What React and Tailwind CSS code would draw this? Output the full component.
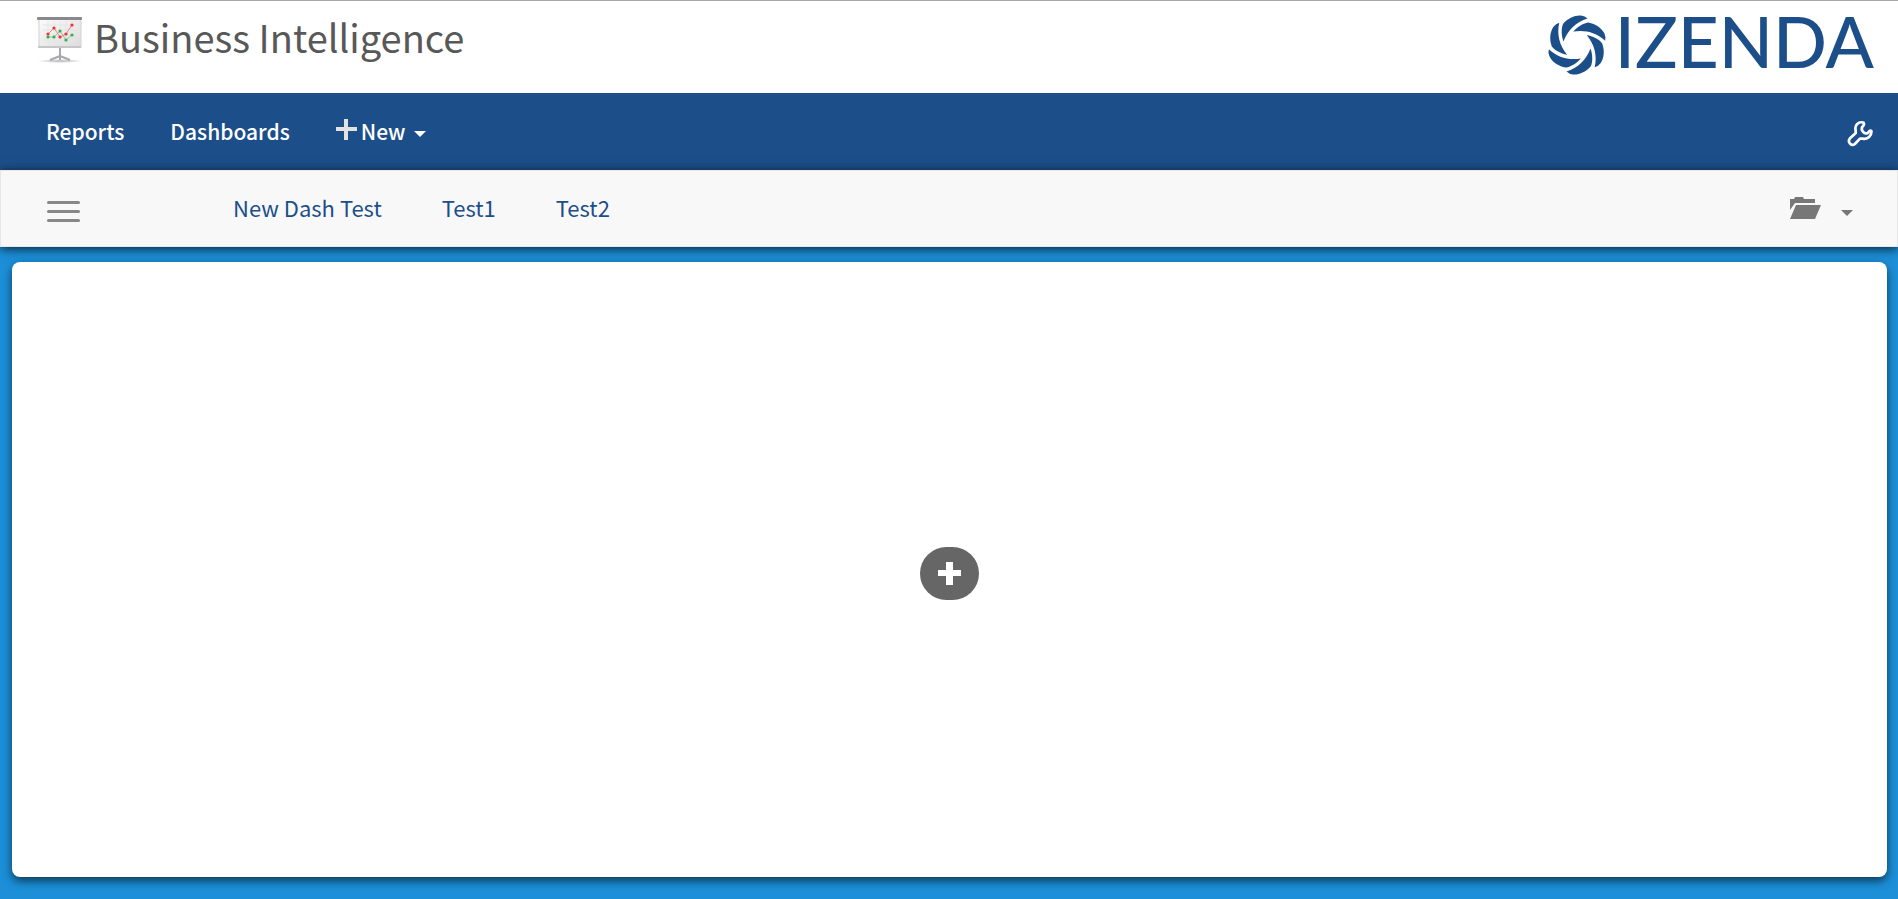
const blades = [0, 60, 120, 180, 240, 300];

function BoardIcon() {
  return (
    <svg className="h-12 w-12" viewBox="0 0 48 48" aria-hidden="true">
      <defs>
        <linearGradient id="board" x1="0" y1="0" x2="1" y2="1">
          <stop offset="0" stopColor="#fbfbfb" />
          <stop offset="1" stopColor="#dcdcdc" />
        </linearGradient>
        <radialGradient id="floor">
          <stop offset="0" stopColor="#b4b4b4" />
          <stop offset="1" stopColor="#ffffff" />
        </radialGradient>
      </defs>
      <ellipse cx="24" cy="45" rx="23" ry="2" fill="url(#floor)" />
      <rect x="3" y="3" width="42" height="28" fill="url(#board)" stroke="#d2d2d4" />
      <path d="M7 9h34M7 14h34M7 19h34M7 24h34M12 5v24M18 5v24M24 5v24M30 5v24M36 5v24" stroke="#e6e6e6" />
      <rect x="1" y="1" width="45" height="3" rx="1" fill="#88888e" />
      <rect x="2" y="30" width="43" height="2" fill="#c6c6c8" />
      <path d="M24 32v12M24 40l-10 4M24 40l10 4" fill="none" stroke="#a8a8ac" strokeWidth="2" />
      <path d="M12 21h6l6-6 6 9 6-5" fill="none" stroke="#8ccc98" />
      <path d="M12 18l6-6 6 9 6-3 6-9" fill="none" stroke="#f08080" />
      <g fill="#2fb04c">
        <circle cx="12" cy="21" r="1.6" /><circle cx="18" cy="21" r="1.6" /><circle cx="24" cy="15" r="1.6" />
        <circle cx="30" cy="24" r="1.6" /><circle cx="36" cy="19" r="1.6" />
      </g>
      <g fill="#ee3038">
        <circle cx="12" cy="18" r="1.6" /><circle cx="18" cy="12" r="1.6" /><circle cx="24" cy="21" r="1.6" />
        <circle cx="30" cy="18" r="1.6" /><circle cx="36" cy="9" r="1.6" />
      </g>
    </svg>
  );
}

function ApertureMark() {
  return (
    <svg className="size-15" viewBox="-30 -30 60 60" fill="#1c4e89" aria-hidden="true">
      {blades.map((angle) => (
        <path
          key={angle}
          transform={`rotate(${angle})`}
          d="M-13.500-3.500C-15.500-9-16-16-14-21C-9-27-2-30 4-29.500Q8-29 10.500-26.500C-1-23-9-15-13.500-3.500Z"
        />
      ))}
    </svg>
  );
}

function Caret() {
  return (
    <svg className="h-[6px] w-3" viewBox="0 0 12 6" fill="currentColor" aria-hidden="true">
      <path d="M0 0h12L6 6Z" />
    </svg>
  );
}

export default function App() {
  return (
    <div className="flex min-h-screen flex-col bg-[#1c8fd8] font-['Noto_Sans_CJK_SC','Open_Sans',sans-serif]">
      <header className="flex h-[93px] items-start justify-between border-t border-[#a8a8a8] bg-white pr-6 pl-9">
        <h1 className="flex items-start gap-[10px] pt-[15px] text-[38px] leading-[42px] text-[#585858]">
          <BoardIcon />
          Business Intelligence
        </h1>
        <div className="flex items-start gap-2 pt-[14px] text-[#1c4e89]">
          <ApertureMark />
          <span className="font-[Lato,sans-serif] text-[71px] leading-[52px] font-medium">IZENDA</span>
        </div>
      </header>

      <nav className="flex h-[77px] items-center justify-between bg-[#1c4e89] pr-6 pl-[46px] text-[21px] font-medium text-white">
        <div className="flex items-center gap-[46px]">
          <a href="#reports">Reports</a>
          <a href="#dashboards">Dashboards</a>
          <button type="button" className="flex items-center">
            <svg className="mr-1 mb-1 size-[21px]" viewBox="0 0 21 21" fill="#e2e2e2" aria-hidden="true">
              <path d="M8 0h4v8h9v4h-9v9H8v-9H0V8h8Z" />
            </svg>
            New
            <span className="ml-2 pt-1"><Caret /></span>
          </button>
        </div>
        <button type="button" aria-label="Settings" className="pt-1">
          <svg className="size-[27px]" viewBox="0 0 24 24" fill="none" stroke="currentColor" strokeWidth="2.4" strokeLinejoin="round" strokeLinecap="round" aria-hidden="true">
            <path d="M14.500 2.200C10 1.200 6.800 4.500 7.600 8.500L7.800 11.500L2.500 16.500C.2 19.500 3.800 23.800 7 21.300L11.500 16.500L14 16.500C18.500 17.500 22 14 21.700 9.800C21 9 20 9.500 18.500 11.500C17 12.200 15.500 12 14.300 10.500C12.800 9 12.800 7.500 13.800 5.800Q16 4 14.500 2.200Z" />
          </svg>
        </button>
      </nav>

      <div className="relative flex h-[77px] items-center justify-between border border-[#e7e7e7] bg-[#f8f8f8] pr-11 pl-[46px] shadow-[0_2px_10px_rgba(0,0,0,0.75)]">
        <div className="flex items-center">
          <button type="button" aria-label="Menu" className="mt-[6px] mr-[153px] flex w-[33px] flex-col gap-[6px]">
            <span className="h-[3px] w-full rounded-xs bg-[#888888]" />
            <span className="h-[3px] w-full rounded-xs bg-[#888888]" />
            <span className="h-[3px] w-full rounded-xs bg-[#888888]" />
          </button>
          <div className="flex gap-[60px] pb-[2px] text-[22px] text-[#1c4e89]">
            <a href="#new-dash-test">New Dash Test</a>
            <a href="#test1">Test1</a>
            <a href="#test2">Test2</a>
          </div>
        </div>
        <button type="button" aria-label="Open dashboard" className="flex items-center gap-5 text-[#777777]">
          <svg className="mb-[2px] h-[22px] w-[31px]" viewBox="0 0 31 22" fill="currentColor" aria-hidden="true">
            <path d="M0 13V2h4l1-2h8l1 2h11v4H5Z" />
            <path d="M6 8h25l-6 14H0Z" />
          </svg>
          <span className="pt-2"><Caret /></span>
        </button>
      </div>

      <main className="mt-[15px] mr-[11px] mb-[22px] ml-3 flex flex-1 items-center justify-center rounded-lg bg-white shadow-[0_4px_10px_rgba(0,0,0,0.6)]">
        <button type="button" aria-label="Add tile" className="mt-2 flex h-[53px] w-[59px] items-center justify-center rounded-[27px] bg-[#666666]">
          <svg className="size-[23px]" viewBox="0 0 23 23" fill="white" aria-hidden="true">
            <path d="M8 0h7v8h8v6h-8v9H8v-9H0V8h8Z" />
          </svg>
        </button>
      </main>
    </div>
  );
}
